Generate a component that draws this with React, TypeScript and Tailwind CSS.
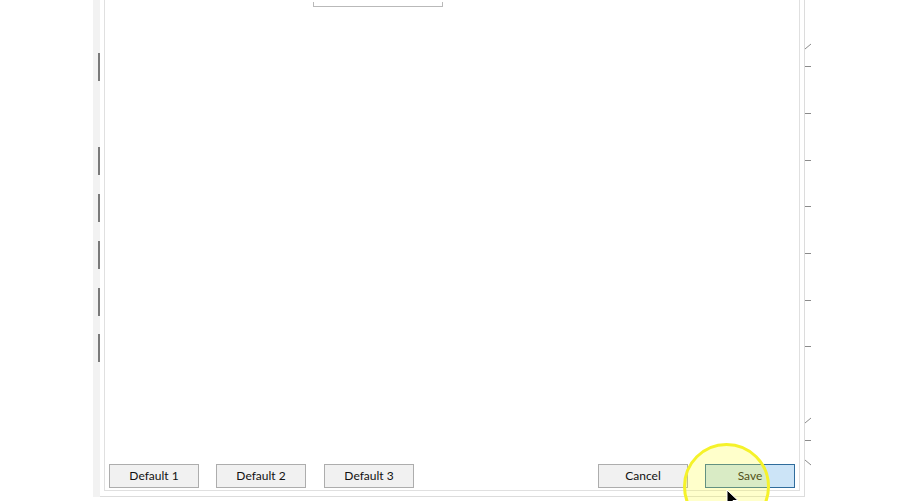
const leftTicks = [53, 147, 194, 241, 288, 334]
const rightTicks = [66, 113, 160, 206, 253, 300, 346, 440]

function Btn({ label, primary }: { label: string; primary?: boolean }) {
  return (
    <button
      className={
        primary
          ? 'block w-[90px] h-[24px] border border-[#2f6c9c] bg-[#cce4f7] text-[12px] text-[#111]'
          : 'block w-[90px] h-[24px] border border-[#adadad] bg-[#f1f1f1] text-[12px] text-[#111]'
      }
    >
      {label}
    </button>
  )
}

export default function App() {
  return (
    <div
      className="relative w-[900px] h-[501px] bg-white overflow-hidden pl-[93px]"
      style={{ fontFamily: 'Lato, "Noto Sans", sans-serif' }}
    >
      <div className="flex w-[719px] h-[497px]">
        {/* left ruler strip */}
        <div className="relative w-[7px] h-[497px] bg-[#f2f2f2]">
          {leftTicks.map((t) => (
            <div key={t} className="absolute left-[5px] w-[2px] h-[28px] bg-[#7a7a7a]" style={{ top: t }} />
          ))}
        </div>

        {/* outer frame */}
        <div className="flex flex-col w-[705px] h-[497px] border-b border-r border-[#dcdcdc] px-[4px]">
          <div className="relative flex-1 flex flex-col justify-end border-l border-r border-b border-[#e0e0e0] pb-[2px] px-[4px] mb-[5px]">
            <div className="absolute left-[208px] top-[2px] w-[130px] h-[5px] border-l border-r border-b border-[#b9b9b9]" />
            <div className="flex items-center">
              <div className="flex items-center gap-[17px]">
                <Btn label="Default 1" />
                <Btn label="Default 2" />
                <div className="flex pl-[1px]">
                  <Btn label="Default 3" />
                </div>
              </div>
              <div className="ml-auto flex items-center gap-[17px]">
                <Btn label="Cancel" />
                <Btn label="Save" primary />
              </div>
            </div>
          </div>
        </div>

        {/* right ruler ticks */}
        <div className="relative w-[7px] h-[497px]">
          {rightTicks.map((t) => (
            <div key={t} className="absolute left-0 w-[6px] h-[1px] bg-[#8a8a8a]" style={{ top: t }} />
          ))}
          <svg className="absolute left-0 top-[42px]" width="7" height="8" viewBox="0 0 7 8">
            <path d="M0 7 L6 2" stroke="#8a8a8a" strokeWidth="1" fill="none" />
          </svg>
          <svg className="absolute left-0 top-[416px]" width="7" height="8" viewBox="0 0 7 8">
            <path d="M0 7 L6 2" stroke="#8a8a8a" strokeWidth="1" fill="none" />
          </svg>
          <svg className="absolute left-0 top-[459px]" width="7" height="8" viewBox="0 0 7 8">
            <path d="M0 1 L6 6" stroke="#8a8a8a" strokeWidth="1" fill="none" />
          </svg>
        </div>
      </div>

      {/* cursor highlight */}
      <div className="absolute left-[683px] top-[443px] w-[87px] h-[87px] rounded-full border-[3px] border-[#f5f22a] bg-[#ffff30]/25 pointer-events-none" />
      <svg className="absolute left-[726px] top-[489px]" width="14" height="20" viewBox="0 0 14 20">
        <path d="M1 1 L1 16 L4.5 12.5 L7 18.5 L9.5 17.5 L7 11.5 L12 11.5 Z" fill="#000" stroke="#fff" strokeWidth="1" />
      </svg>
    </div>
  )
}
